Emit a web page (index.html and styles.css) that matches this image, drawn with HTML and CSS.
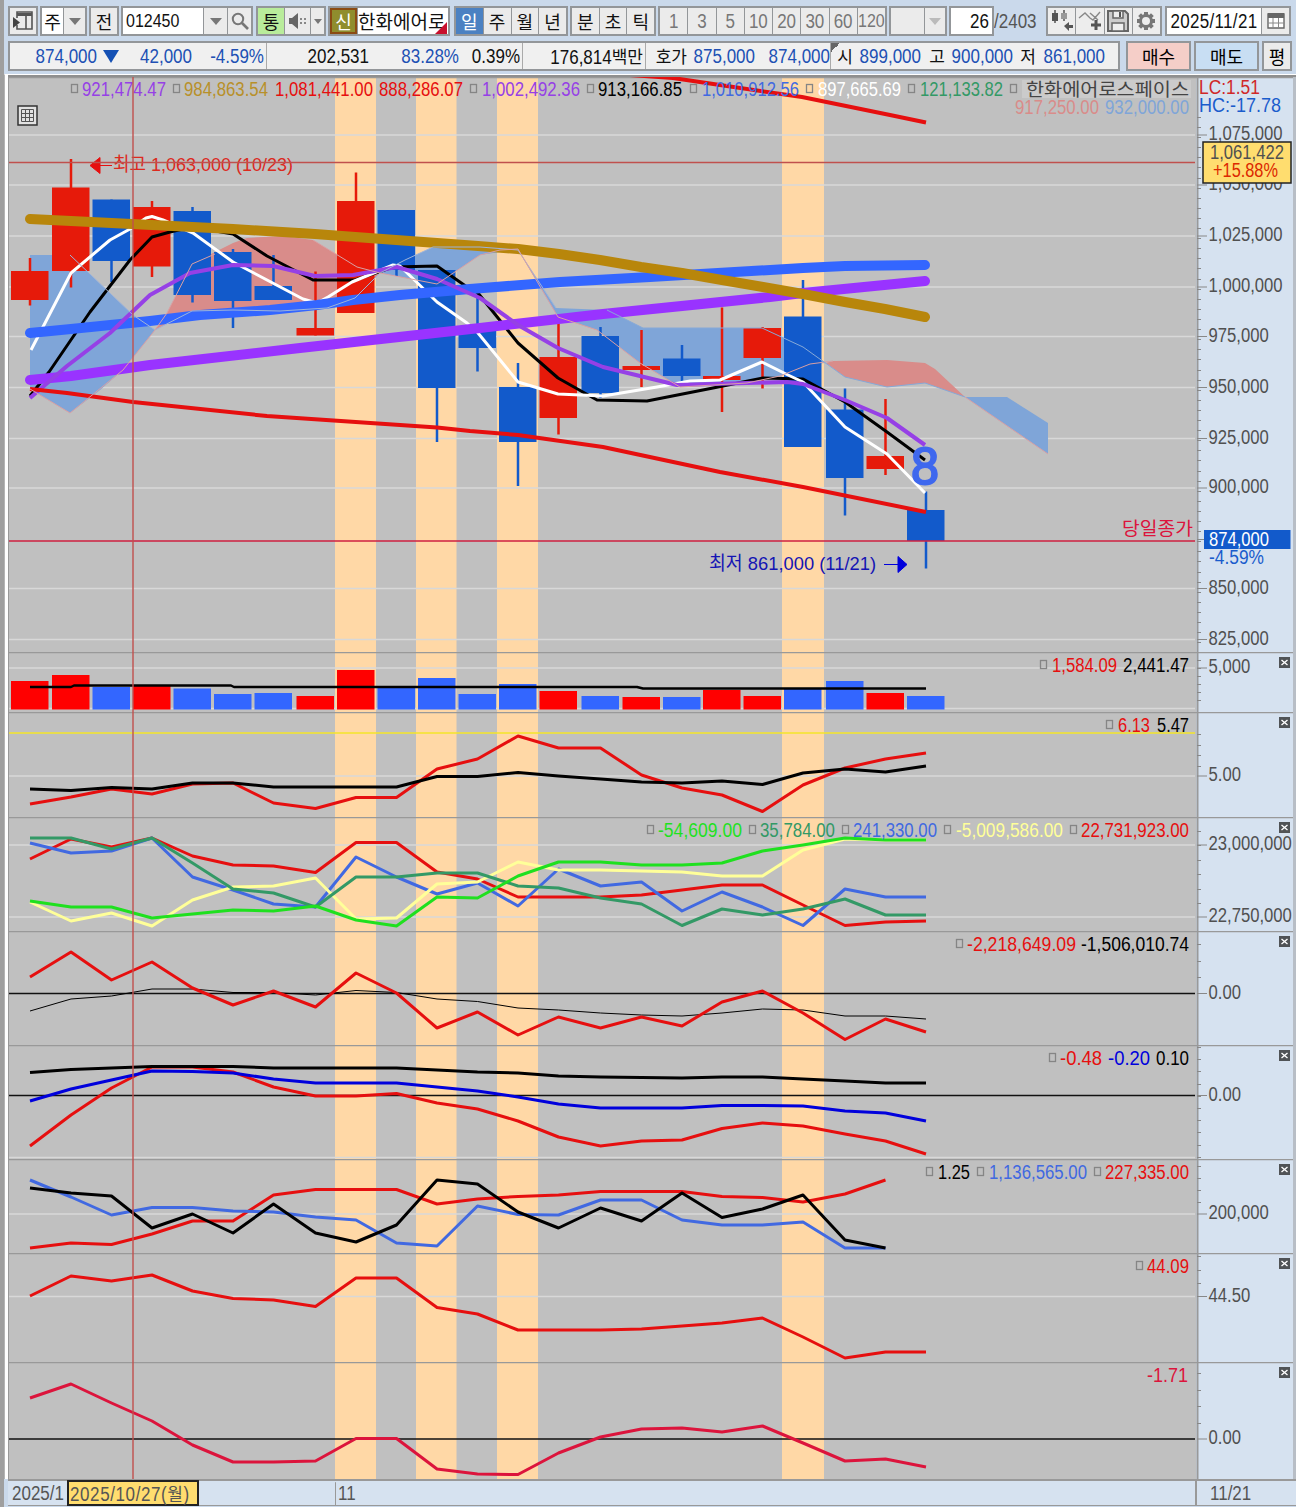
FILE: index.html
```html
<!DOCTYPE html>
<html lang="ko">
<head>
  <meta charset="UTF-8" />
  <title>한화에어로스페이스 - 차트</title>
  <link rel="stylesheet" href="styles.css">
</head>
<body>
  <div class="window">
    <div class="toolbar">
      <div class="group g-menu">
        <span class="cell"><svg width="22" height="22" viewBox="0 0 22 22"><path d="M5 8V2h15v17H5v-4M5 5h15M14 5v14" fill="none" stroke="#555" stroke-width="1.6"/><path d="M5 3h15v3H5z" fill="#555"/><path d="M1 7l7 5.500-7 5.500z" fill="#444"/></svg></span>
      </div>
      <div class="group g-type"><span class="cell white ko">주</span><span class="cell"><i class="caret"></i></span></div>
      <div class="group g-prev"><span class="cell ko">전</span></div>
      <div class="group g-code">
        <span class="cell white left"><b class="num">012450</b></span>
        <span class="cell"><i class="caret"></i></span>
        <span class="cell"><svg width="20" height="20" viewBox="0 0 20 20"><circle cx="8" cy="8" r="5.200" fill="none" stroke="#777" stroke-width="2"/><path d="M12 12l6 6" stroke="#777" stroke-width="2.600"/></svg></span>
      </div>
      <div class="group g-sound">
        <span class="cell green ko">통</span>
        <span class="cell"><svg width="20" height="18" viewBox="0 0 20 18"><path d="M1 6h3l6-5v16l-6-5H1z" fill="#666"/><path d="M12 6h2v2h-2zM16 6h2v2h-2zM12 10h2v2h-2zM16 10h2v2h-2z" fill="#888"/></svg></span>
        <span class="cell"><i class="caret small"></i></span>
      </div>
      <div class="group g-name"><span class="cell olive ko">신</span><span class="cell white left ko name">한화에어로<i class="corner"></i></span></div>
      <div class="group g-period"><span class="cell active ko">일</span><span class="cell ko">주</span><span class="cell ko">월</span><span class="cell ko">년</span></div>
      <div class="group g-tick"><span class="cell ko">분</span><span class="cell ko">초</span><span class="cell ko">틱</span></div>
      <div class="group g-min">
        <span class="cell"><b class="num">1</b></span><span class="cell"><b class="num">3</b></span><span class="cell"><b class="num">5</b></span><span class="cell"><b class="num">10</b></span><span class="cell"><b class="num">20</b></span><span class="cell"><b class="num">30</b></span><span class="cell"><b class="num">60</b></span><span class="cell"><b class="num">120</b></span>
      </div>
      <div class="group g-empty"><span class="cell"></span><span class="cell"><i class="caret light"></i></span></div>
      <div class="group g-count"><span class="cell white right"><b class="num">26</b></span></div>
      <div class="total"><b class="num">/2403</b></div>
      <div class="group g-tools">
        <span class="cell"><svg width="24" height="24" viewBox="0 0 24 24"><path d="M5 1v13M14 1v11" stroke="#555" stroke-width="1.500"/><path d="M2 4h6v8H2z" fill="#555"/><path d="M11 4h6v6h-6z" fill="#999"/><path d="M14 17l5-4v3h4v3h-4v3z" fill="#555"/></svg></span>
        <span class="cell"><svg width="24" height="24" viewBox="0 0 24 24"><path d="M1 9l6-5 5 5 3 2 7-8M12 4l8 7" fill="none" stroke="#888" stroke-width="1.400"/><path d="M18 11v10M13 16h10" stroke="#555" stroke-width="3"/></svg></span>
        <span class="cell"><svg width="24" height="24" viewBox="0 0 24 24"><path d="M2 2h17l3 3v17H2z" fill="#ccc" stroke="#666" stroke-width="2"/><path d="M7 2h10v7H7zM6 14h12v8H6z" fill="#eee" stroke="#666" stroke-width="1.500"/><path d="M14 3v5" stroke="#555" stroke-width="2"/></svg></span>
        <span class="cell"><svg width="22" height="22" viewBox="0 0 22 22"><g stroke="#777" stroke-width="4"><path d="M11 2v18M2 11h18M4.600 4.600l12.800 12.800M17.400 4.600L4.600 17.400"/></g><circle cx="11" cy="11" r="5.500" fill="#eee" stroke="#777" stroke-width="3"/></svg></span>
      </div>
      <div class="group g-date">
        <span class="cell white"><b class="num">2025/11/21</b></span>
        <span class="cell"><svg width="18" height="18" viewBox="0 0 18 18"><path d="M1 2h16v14H1z" fill="#fff" stroke="#666" stroke-width="1.400"/><path d="M1 1h16v5H1z" fill="#666"/><path d="M1 11h16M6 6v10M11.500 6v10" stroke="#888"/></svg></span>
      </div>
    </div>

    <div class="quote-row">
      <div class="quote">
        <b class="num blue">874,000</b>
        <span class="down"></span>
        <b class="num blue">42,000</b>
        <b class="num blue">-4.59%</b>
        <i class="sep"></i>
        <b class="num">202,531</b>
        <b class="num blue">83.28%</b>
        <b class="num">0.39%</b>
        <i class="sep"></i>
        <span><b class="num">176,814</b>백만</span>
        <i class="sep"></i>
        <span>호가</span>
        <b class="num blue">875,000</b>
        <b class="num blue">874,000</b>
        <i class="sep flag"></i>
        <span>시</span>
        <b class="num blue">899,000</b>
        <span>고</span>
        <b class="num blue">900,000</b>
        <span>저</span>
        <b class="num blue">861,000</b>
      </div>
      <button class="order buy">매수</button>
      <button class="order sell">매도</button>
      <button class="order eval">평</button>
    </div>

    <div class="chart" id="chart"></div>

    <div class="dates">
      <div class="date-main">
        <span class="num d-first">2025/1</span>
        <span class="d-cursor"><span class="num">2025/10/27(</span>월<span class="num">)</span></span>
        <span class="num d-month">11</span>
      </div>
      <div class="date-last"><span class="num">11/21</span></div>
    </div>
  </div>
  <script src="chart.js"></script>
</body>
</html>
```

FILE: styles.css
```css
* {
  box-sizing: border-box;
}
body {
  margin: 0;
  width: 1296px;
  height: 1507px;
  overflow: hidden;
  background: #cad9eb;
  font-family: "Liberation Sans", "Noto Sans CJK KR", sans-serif;
  font-size: 17px;
  color: #111;
}
.window {
  height: 1507px;
  border-left: 4px solid #9f9f9f;
}
.num {
  display: inline-block;
  font-weight: normal;
  font-size: 17px;
  line-height: 1;
  transform: scaleY(1.18);
  white-space: nowrap;
}
.blue {
  color: #2050b4;
}

/* toolbar */
.toolbar {
  display: flex;
  height: 36px;
  padding: 6px 0 0 4px;
}
.group {
  display: flex;
  flex: none;
  height: 30px;
  margin-right: 2px;
  border: 2px solid #939699;
  background: #939699;
  gap: 1px;
}
.cell {
  position: relative;
  display: flex;
  flex: 1;
  min-width: 0;
  align-items: center;
  justify-content: center;
  background: #ebebeb;
  white-space: nowrap;
}
.cell.white { background: #fff; }
.cell.left { justify-content: flex-start; padding-left: 3px; }
.cell.right { justify-content: flex-end; padding-right: 3px; }
.cell.green { background: #b9ec9b; }
.cell.olive { background: #8f8d2d; color: #fff; box-shadow: inset 0 0 0 2px #8b4b13; }
.cell.active { background: #4b81c2; color: #fff; }
.ko {
  font-family: "Noto Sans CJK KR", sans-serif;
  font-size: 18px;
  line-height: 24px;
}
.g-menu { width: 30px; }
.g-type { width: 47px; }
.g-prev { width: 30px; }
.g-code { width: 132px; margin-right: 3px; }
.g-code .cell:first-child { flex: 0 0 80px; }
.g-code .num { font-size: 16px; }
.g-sound { width: 70px; }
.g-sound .cell { flex: 0 0 26px; }
.g-sound .cell:nth-child(2) { flex-basis: 25px; }
.g-sound .cell:last-child { flex: 1; }
.g-name { width: 122px; margin-right: 4px; }
.g-name .olive { flex: 0 0 27px; }
.g-name .name { padding-left: 0; font-size: 19px; }
.g-period { width: 114px; }
.g-tick { width: 86px; }
.g-min { width: 229px; color: #777; }
.g-empty { width: 58px; }
.g-empty .cell:last-child { flex: 0 0 20px; }
.g-count { width: 45px; margin-right: 0; }
.total {
  display: flex;
  align-items: center;
  width: 52px;
  color: #555;
}
.g-tools { width: 116px; margin-right: 3px; }
.g-tools .cell { background: #ededed; }
.g-date { width: 126px; margin-right: 0; }
.g-date .cell:last-child { flex: 0 0 27px; }
.g-date .num { letter-spacing: 0.300px; }
.g-min .cell:last-child .num { font-size: 16px; }
.caret {
  border: 6px solid transparent;
  border-top: 7px solid #777;
  border-bottom: 0;
}
.caret.small {
  border-width: 5px 4px 0;
}
.caret.light {
  border-top-color: #bbb;
}
.corner {
  position: absolute;
  right: 1px;
  bottom: 0;
  border-left: 12px solid transparent;
  border-bottom: 12px solid #c8102e;
}

/* quote strip */
.quote-row {
  display: flex;
  height: 38px;
  padding: 5px 0 3px 4px;
}
.quote {
  display: grid;
  grid-template-columns: 87px 25px 70px 72px 3px 102px 90px 61px 3px 120px 3px 41px 68px 75px 4px 19px 68px 24px 68px 23px 69px;
  align-items: center;
  justify-items: end;
  flex: none;
  width: 1112px;
  height: 30px;
  margin-right: 6px;
  border: 2px solid #939699;
  background: #f0f0f0;
  font-family: "Noto Sans CJK KR", sans-serif;
  line-height: 26px;
  white-space: nowrap;
}
.quote .num,
.dates .num {
  font-family: "Liberation Sans", sans-serif;
}
.down {
  margin-right: 3px;
  border: 8px solid transparent;
  border-top: 13px solid #1450b4;
  border-bottom: 0;
}
.sep {
  width: 1px;
  height: 26px;
  background: #aaa;
}
.flag {
  justify-self: start;
  width: 9px;
  border-left: 1px solid #aaa;
  background: linear-gradient(135deg, #666 50%, transparent 50%) no-repeat 0 0 / 9px 9px;
}
.order {
  height: 30px;
  margin: 0 3px 0 0;
  padding: 0;
  border: 2px solid #939699;
  background: #ebebeb;
  font-family: "Noto Sans CJK KR", sans-serif;
  font-size: 18px;
  line-height: 24px;
}
.buy { width: 65px; background: #f5cec8; }
.sell { width: 65px; background: #c8def3; }
.eval { width: 30px; }

/* chart panels */
.chart {
  padding: 2px 0 0 3px;
  border-left: 1px solid #b5b5b5;
  background: linear-gradient(90deg, #fff 3px, #8f8f8f 3px);
  border-top: 1px solid #fff;
}
.panel {
  display: grid;
  grid-template-columns: 1188px 97px;
  width: 1288px;
  border-right: 3px solid #b8bec6;
}
.panel svg {
  display: block;
}
.axis {
  background: #d6e2f0;
}
.plot {
  background: #c0c0c0;
}
svg text {
  font-family: "Liberation Sans", "Noto Sans CJK KR", sans-serif;
  font-size: 19.500px;
}
svg text.hangul {
  font-size: 18px;
}
svg text.note {
  font-size: 19px;
}

/* date axis */
.dates {
  display: grid;
  grid-template-columns: 1189px 97px;
  height: 27px;
  margin-left: 4px;
  border-top: 2px solid #999;
  border-bottom: 1px solid #999;
  background: #d6e2f0;
  color: #555;
}
.date-main {
  display: flex;
  align-items: center;
  border-right: 2px solid #999;
}
.date-last {
  display: flex;
  align-items: center;
  padding-left: 13px;
}
.d-first {
  width: 55px;
  padding-left: 4px;
}
.d-cursor {
  width: 132px;
  height: 26px;
  margin-top: -1px;
  margin-left: 4px;
  padding-left: 1px;
  border: 2px solid #222;
  background: #ffdd6f;
  font-family: "Noto Sans CJK KR", sans-serif;
  line-height: 21px;
  letter-spacing: 0.600px;
  white-space: nowrap;
}
.d-month {
  margin-left: 136px;
  padding-left: 2px;
  line-height: 20px;
  border-left: 1px solid #999;
}
```

FILE: chart.js
```js
const NS = "http://www.w3.org/2000/svg";
const LEFT = 8, PLOT_RIGHT = 1196;
const CROSS_X = 133;

// x centre of each trading day
const days = [30, 71, 111.5, 152, 192.5, 233, 273.5, 315.5, 356, 396.5, 437, 477.5, 518, 558.5, 600.5, 641.5, 682, 722, 762.5, 803, 845, 885.5, 926];
const bands = [[335, 41], [416, 40.5], [497, 41], [782, 42]];

const RED = "#e60f0f", BLUE = "#4169e1", GREEN = "#339966", LIME = "#1fe01f", PALE = "#ffff99", PURPLE = "#9640e6", CRIMSON = "#dc143c";

// [high, body top, body bottom, low, up]
const candles = [
  [258, 271, 300, 305.5, 1], [159, 187.5, 271, 287.5, 1], [199.5, 199.5, 261, 282, 0], [201, 207, 266.5, 277, 1],
  [207, 211, 295, 302.5, 0], [249, 252, 301, 328, 0], [255, 286, 300, 300, 0], [271.5, 328, 335.5, 335.5, 1],
  [172.5, 201, 313, 313, 1], [210, 210, 270, 276, 0], [270, 270, 388, 442, 0], [293, 327, 348, 371.5, 0],
  [363, 387, 442, 486, 0], [322, 357, 418, 434.5, 1], [327, 336, 393, 398, 0], [330, 366, 370, 387, 1],
  [345, 358.5, 376, 382, 0], [307.5, 376, 380, 412, 1], [327, 328, 358, 388.5, 1], [280, 316.5, 447, 447, 0],
  [388.5, 409.5, 478, 515.5, 0], [399, 456, 469, 475, 1], [491.5, 510, 541, 568.5, 0]
];
const volumes = [681, 675, 687, 686, 688.5, 694, 693, 696, 670, 687, 678, 694, 684, 691, 696, 697, 697, 690, 696, 689, 681, 693, 696];

const panels = [
  {
    top: 77, bottom: 652, grid: [135, 185, 236, 287, 336.5, 387.5, 438.5, 488, 588.5, 639.5],
    labels: [[135, "1,075,000"], [185, "1,050,000"], [236, "1,025,000"], [287, "1,000,000"], [336.5, "975,000"], [387.5, "950,000"], [438.5, "925,000"], [488, "900,000"], [588.5, "850,000"], [639.5, "825,000"]],
    minor: [117, 652, 10.1], draw: drawPrice
  },
  {
    top: 652, bottom: 712, grid: [668, 708.5], labels: [[668, "5,000"]], minor: [660, 708, 8],
    legend: [["□", 1040], ["1,584.09", 1052, 1117, RED], ["2,441.47", 1123, 1189, "#000"]],
    draw: drawVolume
  },
  {
    top: 712, bottom: 817, grid: [776], labels: [[776, "5.00"]], minor: [734, 775, 10.5],
    rule: [733, "#f5e628"],
    legend: [["□", 1106], ["6.13", 1118, 1150, RED], ["5.47", 1157, 1189, "#000"]],
    lines: [
      [RED, 3, [804, 797, 789, 794, 784, 783, 803, 808.5, 797.5, 797.5, 769, 759, 736, 748, 748, 775, 788, 795, 811.5, 785, 768, 759, 753]],
      ["#000", 3, [789, 790.5, 787.5, 789, 783, 783, 787, 787, 787, 787, 776.5, 776.5, 772.5, 776, 779, 782, 783, 781, 784.5, 773, 769, 772, 766]]
    ]
  },
  {
    top: 817, bottom: 931, grid: [845, 917], labels: [[845, "23,000,000"], [917, "22,750,000"]], minor: [831, 917, 14.4],
    legend: [["□", 647], ["-54,609.00", 658, 742, LIME], ["□", 749], ["35,784.00", 760, 835, GREEN], ["□", 842], ["241,330.00", 853, 937, BLUE], ["□", 944], ["-5,009,586.00", 956, 1063, PALE], ["□", 1070], ["22,731,923.00", 1081, 1189, RED]],
    lines: [
      [RED, 3, [859, 839, 847, 838, 856, 865, 866, 872.5, 842.5, 842.5, 872, 879, 897, 897, 897, 895, 890, 885, 885, 905, 925.5, 922, 921]],
      [BLUE, 3, [843, 853, 851, 838, 877, 890, 904, 907, 857, 877, 894, 883, 906, 869, 886, 882, 911, 892, 907, 925.5, 889, 897, 897]],
      [PALE, 3, [902, 921, 913, 926, 900, 887, 886, 878, 919, 918, 884, 882, 862, 870, 870, 871, 872, 876, 876, 850, 839, 840, 840]],
      [GREEN, 3, [838, 838, 849, 838, 863, 889, 893, 907, 877, 877, 873, 873, 886, 888, 898, 904, 925.5, 909, 915, 909, 899, 915, 915]],
      [LIME, 3, [901, 907, 907, 918, 914, 910, 911, 906, 920, 926, 897, 898, 876, 862, 862, 865, 865, 863, 851, 845, 838, 840, 840]]
    ]
  },
  {
    top: 931, bottom: 1045, labels: [[993.5, "0.00"]], minor: [944, 993, 16.5], rule: [993.5, "#111"],
    legend: [["□", 956], ["-2,218,649.09", 967, 1076, RED], ["-1,506,010.74", 1081, 1189, "#000"]],
    lines: [
      ["#000", 1, [1011, 999, 996, 989, 989, 992.5, 992.5, 995, 990.5, 992.5, 999, 1001.5, 1008, 1010, 1013, 1015, 1016, 1013, 1009, 1010, 1016, 1016, 1019]],
      [RED, 3, [977, 952, 980, 962, 988, 1005, 991, 1007, 973, 993, 1028, 1012, 1035, 1017, 1028, 1017, 1026, 1002, 991, 1013, 1039.5, 1019, 1032]]
    ]
  },
  {
    top: 1045, bottom: 1159, grid: [1157.5], labels: [[1095.5, "0.00"]], minor: [1047, 1157, 12.2], rule: [1095.5, "#111"],
    legend: [["□", 1049], ["-0.48", 1060, 1102, RED], ["-0.20", 1108, 1150, "#0000dc"], ["0.10", 1156, 1189, "#000"]],
    lines: [
      [RED, 3, [1146, 1115, 1088, 1067, 1067, 1072, 1087, 1096, 1096, 1093.5, 1103, 1109, 1121, 1137, 1146, 1141, 1140, 1128.5, 1123, 1126, 1134, 1141, 1154]],
      ["#0000dc", 3, [1101, 1089, 1080, 1071, 1071.5, 1073, 1079, 1083, 1083, 1083, 1087, 1091, 1097, 1104, 1108, 1108, 1108, 1105.5, 1105.5, 1106, 1111, 1113, 1121]],
      ["#000", 3, [1072.5, 1069.5, 1068, 1066.5, 1066.5, 1066.5, 1068, 1068, 1068, 1068, 1070, 1072, 1073, 1076, 1077, 1077.5, 1078, 1077, 1077, 1079, 1081, 1083, 1083]]
    ]
  },
  {
    top: 1159, bottom: 1253, grid: [1214], labels: [[1214, "200,000"]], minor: [1166, 1213, 12],
    legend: [["□", 926], ["1.25", 938, 970, "#000"], ["□", 977], ["1,136,565.00", 989, 1087, BLUE], ["□", 1094], ["227,335.00", 1105, 1189, RED]],
    lines: [
      [RED, 3, [1248, 1243, 1244.5, 1234, 1221, 1221, 1195, 1189.5, 1189.5, 1189.5, 1204, 1199, 1196.5, 1195, 1191.5, 1191.5, 1191.5, 1196.5, 1197.5, 1202, 1194, 1180]],
      [BLUE, 3, [1180, 1197, 1215, 1207.5, 1207.5, 1211, 1212, 1217, 1220, 1243, 1246, 1206, 1214.5, 1215, 1200, 1200, 1220, 1225, 1225, 1222, 1248, 1248]],
      ["#000", 3, [1188, 1193, 1196, 1228, 1214, 1233, 1204, 1233, 1242, 1225, 1180, 1184, 1212, 1228, 1208, 1221, 1193, 1217.5, 1209, 1195, 1240, 1248]]
    ]
  },
  {
    top: 1253, bottom: 1362, grid: [1296.5], labels: [[1296.5, "44.50"]], minor: [1256, 1290, 13.5],
    legend: [["□", 1136], ["44.09", 1147, 1189, RED]],
    lines: [[RED, 3, [1296, 1276, 1281, 1275, 1291, 1298.5, 1300, 1306.5, 1278, 1278, 1307.5, 1314, 1330, 1330, 1330, 1329, 1326, 1323, 1318, 1337, 1358, 1352, 1352]]]
  },
  {
    top: 1362, bottom: 1479, labels: [[1439, "0.00"]], minor: [1373, 1430, 16.5], rule: [1439, "#111"],
    legend: [["-1.71", 1147, 1188, CRIMSON]],
    lines: [[CRIMSON, 3, [1398, 1384, 1403, 1421, 1445, 1462, 1462, 1461, 1438.5, 1438.5, 1469, 1474, 1474.5, 1453, 1437, 1429, 1428, 1432, 1426, 1443, 1461, 1459, 1467]]]
  }
];

function add(parent, tag, attrs, content) {
  const node = document.createElementNS(NS, tag);
  for (const key in attrs) node.setAttribute(key, attrs[key]);
  if (content) node.textContent = content;
  parent.appendChild(node);
  return node;
}

// text squeezed between two x positions
function fit(svg, str, x0, x1, y, fill, cls) {
  return add(svg, "text", { x: x0, y, fill, textLength: x1 - x0, lengthAdjust: "spacingAndGlyphs", class: cls || "" }, str);
}

function hline(svg, x0, x1, y, color, width) {
  add(svg, "path", { d: `M${x0} ${y}H${x1}`, stroke: color, "stroke-width": width || 1, fill: "none" });
}

function poly(svg, points, color, width, cap) {
  add(svg, "polyline", { points: points, fill: "none", stroke: color, "stroke-width": width, "stroke-linejoin": "round", "stroke-linecap": cap || "butt" });
}

function marker(svg, x, y) {
  add(svg, "rect", { x: x + 0.5, y: y + 0.5, width: 6, height: 8, fill: "none", stroke: "#858585", "stroke-width": 1.3 });
}

function legend(svg, items, y) {
  items.forEach(([str, x0, x1, color]) => {
    if (str === "□") marker(svg, x0, y - 12);
    else fit(svg, str, x0, x1, y, color);
  });
}

function drawPrice(svg) {
  // cloud
  const pink = "#d98c8a", sky = "#7fa5d8";
  add(svg, "polygon", { fill: sky, points: "30,255 70,255 133,315 155,330 123,370 100,390 70,413 30,389" });
  add(svg, "polygon", { fill: pink, points: "155,330 167,313 192,264 215,252 233,243 247,238 283,236 313,240 357,267 380,273 355,298 327,308 280,312 233,310 192,311" });
  add(svg, "polygon", { fill: sky, points: "380,273 405,260 433,247 480,247 518,250 556,308 607,310 643,328 762,328 803,347 826,363 810,364 780,376 747,383 680,387 640,363 597,330 558,317 518,250 500,252 480,255 437,284" });
  add(svg, "polygon", { fill: pink, points: "826,363 833,361 887,360 925,363 935,369 965,397 925,383 887,387 845,377" });
  add(svg, "polygon", { fill: sky, points: "965,397 1007,397 1048,423 1048,454" });

  candles.forEach(([high, top, bottom, low, up], i) => {
    const color = up ? "#e61a0a" : "#125acb";
    add(svg, "rect", { x: days[i] - 1.25, y: high, width: 2.5, height: low - high, fill: color });
    add(svg, "rect", { x: days[i] - 19, y: top, width: 37.5, height: bottom - top, fill: color });
  });

  poly(svg, "30,396 49,372 90,312 130,260 152,237 170,232 192,227 233,234 267,256 313,280 355,280 393,267 437,266 467,287 478,293 518,343 558,378 597,400 647,401 713,388 763,378 803,379 845,402 887,432 925,460", "#000", 3);
  poly(svg, "31,350 71,273 110,240 130,229 146,218 152,216.5 163,220 193,233 233,262 303,299 317,303 328,297 352,282 393,265 400,266 437,302 467,323 478,333 518,382 558,394 603,396 657,387 690,381 720,380 762,362 788,375 803,382 845,427 887,454 925,493", "#fff", 3);
  poly(svg, "30,333 71,329 150,321 200,315 270,310 317,305 353,300 400,295 470,289 560,282 650,277 803,268 845,266 925,265", "#3366ff", 10, "round");
  poly(svg, "30,380 71,376 150,365 300,348 480,328 603,314 770,297 803,293 925,281", "#9933ff", 10, "round");
  poly(svg, "30,398 67,366 110,333 150,295 190,273 233,265 273,266 315,276 353,275 397,267 437,279 480,298 518,325 558,348 603,367 677,385 747,383 787,382 803,384 845,400 887,418 925,445", PURPLE, 4);
  poly(svg, "30,219 71,221 152,225 233,229 315,234 396,240 437,243 478,246 518,249 559,254 600,260 641,267 682,273 722,280 763,287 803,294 845,302 885,309 925,317", "#b8860b", 10, "round");
  poly(svg, "30,389 67,393 133,402 267,416 437,427.5 470,431 518,435 603,447 720,472 803,487 926,512", RED, 4);
  poly(svg, "630,75 673,78 720,85 802,97 890,115 926,122.5", RED, 4);

  // cloud outlines
  poly(svg, "70,255 133,315 155,330 192,311 233,310 280,311 327,308 355,298 380,273 405,260 433,247 480,247 518,250 556,308", "#9fb4d8", 1);
  poly(svg, "30,389 70,413 123,370 155,330 167,313 192,264 215,254", "#d9a0a4", 1);
  poly(svg, "313,240 357,267 380,273 437,284 480,255 500,250 518,249 558,317 597,330 640,363 680,387 747,383 780,376 810,364 833,361", "#d9a0a4", 1);
  poly(svg, "607,310 643,328 762,328 803,347 845,377 887,387 925,383 965,397", "#86a9d8", 1);
  poly(svg, "965,397 1048,454", "#d9a0a4", 1);

  const eight = fit(svg, "8", 911, 939, 484, "#3f68ee");
  eight.setAttribute("style", "font-size:52px");
  eight.setAttribute("stroke", "#3f68ee");
  eight.setAttribute("stroke-width", "2");

  fit(svg, "최고 1,063,000 (10/23)", 113, 293, 171, "#dc2a1e", "note");
  add(svg, "path", { d: "M90 165.500l10-8v16zM98 165.500h14", fill: RED, stroke: RED, "stroke-width": 1 });
  fit(svg, "최저 861,000 (11/21)", 709, 876, 570, "#1414b4", "note");
  add(svg, "path", { d: "M907 564.500l-9-8v16zM898 564.500h-14", fill: "#0000dc", stroke: "#0000dc", "stroke-width": 1 });
  fit(svg, "당일종가", 1122, 1193, 535, CRIMSON, "hangul");
  hline(svg, LEFT, PLOT_RIGHT - 1, 541, "#cf2040", 1.5);
  hline(svg, LEFT, PLOT_RIGHT - 1, 162.5, "#c0504d", 1.5);

  add(svg, "rect", { x: 1022, y: 80, width: 169, height: 18, fill: "#cbcbcb" });
  legend(svg, [["□", 71], ["921,474.47", 82, 166, PURPLE], ["□", 173], ["984,863.54", 184, 268, "#b8902a"],
    ["1,081,441.00", 275, 373, RED], ["888,286.07", 379, 463, RED], ["□", 470], ["1,002,492.36", 482, 580, PURPLE],
    ["□", 587], ["913,166.85", 598, 682, "#000"], ["□", 690], ["1,010,912.56", 702, 799, BLUE],
    ["□", 806], ["897,665.69", 818, 901, "#fff"], ["□", 908], ["121,133.82", 920, 1003, GREEN], ["□", 1010]], 96);
  fit(svg, "한화에어로스페이스", 1026, 1189, 96, "#444", "hangul");
  fit(svg, "917,250.00", 1015, 1099, 114, "#d98c8a");
  fit(svg, "932,000.00", 1105, 1189, 114, "#7fa5d8");

  // grid button
  add(svg, "rect", { x: 18, y: 106, width: 19, height: 19, fill: "#e2e2e2", stroke: "#333", "stroke-width": 1.5 });
  add(svg, "path", { d: "M21.500 109.500h12v12h-12zM21.500 113.500h12M21.500 117.500h12M25.500 109.500v12M29.500 109.500v12", fill: "none", stroke: "#555", "stroke-width": 1 });
}

function drawVolume(svg) {
  volumes.forEach((y, i) => {
    const up = candles[i][4];
    add(svg, "rect", { x: days[i] - 19, y: y, width: 37.5, height: 709.5 - y, fill: up ? "#ff0000" : "#3366ff" });
  });
  poly(svg, "30,687 71,687 74,685.5 231,685.5 234,687 637,687 643,688.5 926,688.5", "#000", 2.5);
}

function drawAxis(svg, p, first) {
  hline(svg, 1196, 1293, p.top + 0.5, "#999", 1.5);
  add(svg, "path", { d: `M1197.500 ${p.top}V${p.bottom}`, stroke: "#999", "stroke-width": 2 });
  if (p.minor) {
    for (let y = p.minor[0]; y < p.minor[1]; y += p.minor[2]) hline(svg, 1197, 1201, Math.round(y) + 0.5, "#888");
  }
  p.labels.forEach(([y, str]) => {
    hline(svg, 1197, 1207, y, "#888");
    add(svg, "text", { transform: `translate(1208.500 ${y + 5}) scale(.855 1)`, fill: "#505050" }, str);
  });
  if (first) {
    fit(svg, "LC:1.51", 1199, 1260, 94, "#d02828");
    fit(svg, "HC:-17.78", 1199, 1281, 112, "#1a5ccc");
    add(svg, "rect", { x: 1203, y: 142, width: 88, height: 41, fill: "#ffdd6f", stroke: "#222", "stroke-width": 1.5 });
    fit(svg, "1,061,422", 1210, 1284, 158.5, "#505050");
    fit(svg, "+15.88%", 1213, 1278, 177, "#dc2800");
    hline(svg, 1197, 1207, 539.5, "#888");
    fit(svg, "-4.59%", 1209, 1264, 564, "#1a5ccc");
    add(svg, "rect", { x: 1204, y: 530, width: 86.5, height: 19, fill: "#125acb" });
    fit(svg, "874,000", 1209, 1269, 546, "#fff");
  } else {
    add(svg, "rect", { x: 1279, y: p.top + 5, width: 11, height: 11, fill: "#505356" });
    add(svg, "path", { d: `M1281.500 ${p.top + 8}l6 5M1287.500 ${p.top + 8}l-6 5`, stroke: "#fff", "stroke-width": 1.4 });
  }
}

const chart = document.getElementById("chart");
panels.forEach((p, n) => {
  const h = p.bottom - p.top;
  const row = document.createElement("div");
  row.className = "panel";
  const plot = add(row, "svg", { class: "plot", width: 1188, height: h, viewBox: `${LEFT} ${p.top} 1188 ${h}` });
  const axis = add(row, "svg", { class: "axis", width: 97, height: h, viewBox: `1196 ${p.top} 97 ${h}` });

  bands.forEach(([x, w]) => add(plot, "rect", { x, y: p.top, width: w, height: h, fill: "#ffd8a6" }));
  (p.grid || []).forEach(y => hline(plot, LEFT, PLOT_RIGHT - 1, y, "#d8d8d8", 1.5));
  hline(plot, LEFT, 1196, p.top + 0.5, "#999", 1.5);
  if (p.rule) hline(plot, LEFT, PLOT_RIGHT - 1, p.rule[0], p.rule[1], 1.6);
  if (p.draw) p.draw(plot);
  (p.lines || []).forEach(([color, width, ys]) => {
    poly(plot, ys.map((y, i) => days[i] + "," + y).join(" "), color, width);
  });
  if (p.legend) legend(plot, p.legend, p.top + 20);
  add(plot, "path", { d: `M${CROSS_X} ${p.top}V${p.bottom}`, stroke: "#c0504d", "stroke-width": 1.4 });
  add(plot, "path", { d: `M${LEFT + 0.5} ${p.top}V${p.bottom}`, stroke: "#999", "stroke-width": 1 });
  drawAxis(axis, p, n === 0);
  chart.appendChild(row);
});
```
